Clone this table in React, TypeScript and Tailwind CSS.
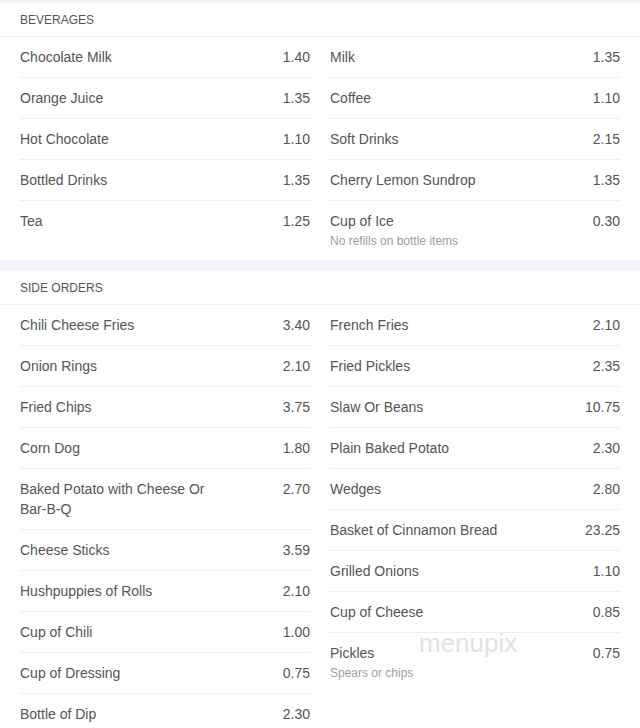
import React from "react";

type Item = { name: string; price: string; desc?: string };

const bevLeft: Item[] = [
  { name: "Chocolate Milk", price: "1.40" },
  { name: "Orange Juice", price: "1.35" },
  { name: "Hot Chocolate", price: "1.10" },
  { name: "Bottled Drinks", price: "1.35" },
  { name: "Tea", price: "1.25" },
];
const bevRight: Item[] = [
  { name: "Milk", price: "1.35" },
  { name: "Coffee", price: "1.10" },
  { name: "Soft Drinks", price: "2.15" },
  { name: "Cherry Lemon Sundrop", price: "1.35" },
  { name: "Cup of Ice", price: "0.30", desc: "No refills on bottle items" },
];
const sideLeft: Item[] = [
  { name: "Chili Cheese Fries", price: "3.40" },
  { name: "Onion Rings", price: "2.10" },
  { name: "Fried Chips", price: "3.75" },
  { name: "Corn Dog", price: "1.80" },
  { name: "Baked Potato with Cheese Or Bar-B-Q", price: "2.70" },
  { name: "Cheese Sticks", price: "3.59" },
  { name: "Hushpuppies of Rolls", price: "2.10" },
  { name: "Cup of Chili", price: "1.00" },
  { name: "Cup of Dressing", price: "0.75" },
  { name: "Bottle of Dip", price: "2.30" },
];
const sideRight: Item[] = [
  { name: "French Fries", price: "2.10" },
  { name: "Fried Pickles", price: "2.35" },
  { name: "Slaw Or Beans", price: "10.75" },
  { name: "Plain Baked Potato", price: "2.30" },
  { name: "Wedges", price: "2.80" },
  { name: "Basket of Cinnamon Bread", price: "23.25" },
  { name: "Grilled Onions", price: "1.10" },
  { name: "Cup of Cheese", price: "0.85" },
  { name: "Pickles", price: "0.75", desc: "Spears or chips" },
];

function Column({ items }: { items: Item[] }) {
  return (
    <div className="flex flex-col">
      {items.map((it) => (
        <div
          key={it.name}
          className="mx-[10px] py-[10px] border-b border-[#efefef] last:border-b-0"
        >
          <div className="flex justify-between text-[14px] leading-[20px] text-[#555]">
            <span className="w-[205px]">{it.name}</span>
            <span className="text-right">{it.price}</span>
          </div>
          {it.desc && (
            <div className="text-[12px] leading-[18px] pt-[1px] text-[#9e9e9e]">{it.desc}</div>
          )}
        </div>
      ))}
    </div>
  );
}

function Section({ title, left, right }: { title: string; left: Item[]; right: Item[] }) {
  return (
    <div className="bg-white">
      <div className="h-[34px] flex items-center px-[20px] border-b border-[#efefef] text-[12px] text-[#555]">
        {title}
      </div>
      <div className="grid grid-cols-2 px-[10px]">
        <Column items={left} />
        <Column items={right} />
      </div>
    </div>
  );
}

export default function App() {
  return (
    <div
      className="relative w-[640px] h-[728px] overflow-hidden bg-[#f4f4f8] pt-[3px]"
      style={{ fontFamily: '"Liberation Sans", Arial, sans-serif' }}
    >
      <Section title="BEVERAGES" left={bevLeft} right={bevRight} />
      <div className="h-[11px]" />
      <Section title="SIDE ORDERS" left={sideLeft} right={sideRight} />
      <span className="absolute left-[419px] top-[628px] text-[26px] leading-[30px] font-light text-[#dcdcdc] opacity-80 pointer-events-none">
        menupix
      </span>
    </div>
  );
}
